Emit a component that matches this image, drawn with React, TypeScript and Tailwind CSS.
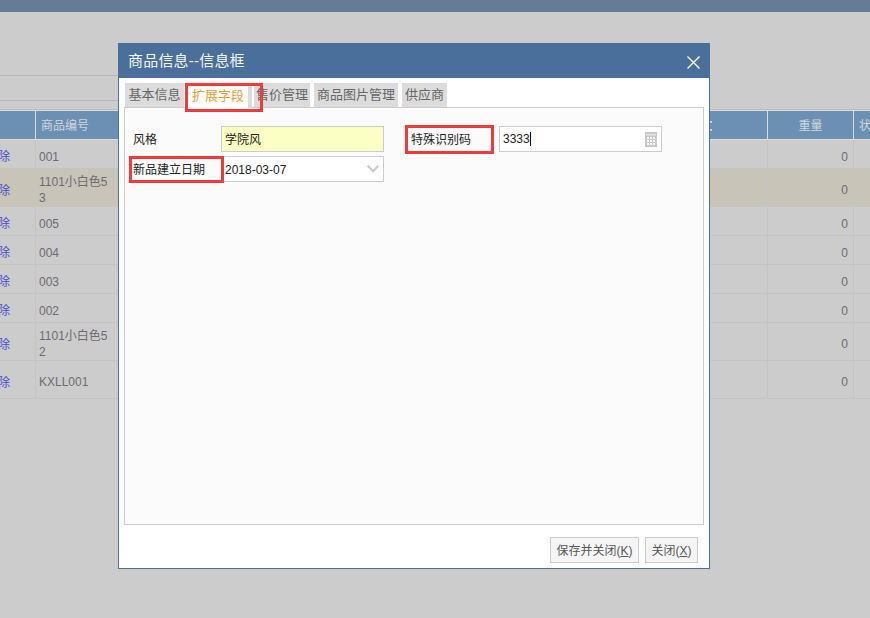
import React from 'react';

const FONT = "font-['Liberation_Sans','Noto_Sans_CJK_SC',sans-serif]";

const ROWS = [
  { code: ['001'], h: 'h-[29px]' },
  { code: ['1101小白色5', '3'], h: 'h-[38px]', hi: true },
  { code: ['005'], h: 'h-[29px]' },
  { code: ['004'], h: 'h-[29px]' },
  { code: ['003'], h: 'h-[29px]' },
  { code: ['002'], h: 'h-[29px]' },
  { code: ['1101小白色5', '2'], h: 'h-[38px]' },
  { code: ['KXLL001'], h: 'h-[38px]' },
];

// background grid behind the modal, dimmed by the overlay colours
function BackgroundPage() {
  return (
    <div className="w-full h-full bg-[#cccccc] overflow-hidden">
      <div className="h-[12px] bg-[#667c96]" />
      <div className="h-[63px]" />
      <div className="h-[26px] w-[300px] border-y border-[#b8b8b8]" />
      <div className="h-[9px] border-b border-[#bcbcbc]" />
      <div className="flex h-[30px] bg-[#6c90b4] border-y border-[#dcdcdc] text-[12px] text-[#cfd6dc]">
        <div className="w-[36px] border-r border-[#dcdcdc]" />
        <div className="flex-1 pl-[5px] pt-[2px] flex items-center justify-between pr-[55px]">
          <span>商品编号</span>
          <div className="flex flex-col gap-[6px]">
            <div className="w-[2px] h-[2px] bg-[#c5cdd6]" />
            <div className="w-[2px] h-[2px] bg-[#c5cdd6]" />
          </div>
        </div>
        <div className="w-[87px] pt-[2px] border-x border-[#dcdcdc] flex items-center justify-center">重量</div>
        <div className="w-[16px] pt-[2px] pl-[5px] flex items-center whitespace-nowrap overflow-hidden">状态</div>
      </div>
      {ROWS.map((r, i) => (
        <div
          key={i}
          className={`flex ${r.h} border-b border-[#c4c4c4] text-[12px] text-[#6f6a72] ${r.hi ? 'bg-[#c8c4b8]' : ''}`}
        >
          <div className="w-[36px] pt-[6px] border-r border-[#c4c4c4] flex items-center justify-end pr-[25px]">
            <span className="text-[#4a4ad0] whitespace-nowrap">删除</span>
          </div>
          <div className="flex-1 pl-[3px] pt-[5px] flex flex-col justify-center leading-[16px]">
            {r.code.map(c => <span key={c}>{c}</span>)}
          </div>
          <div className="w-[87px] pt-[5px] border-x border-[#c4c4c4] flex items-center justify-end pr-[5px]">0</div>
          <div className="w-[16px]" />
        </div>
      ))}
    </div>
  );
}

const TABS = [
  { label: '基本信息', cls: 'w-[59px]' },
  { label: '扩展字段', cls: 'w-[64px] ml-[4px]', active: true },
  { label: '售价管理', cls: 'w-[56px] ml-[2px]' },
  { label: '商品图片管理', cls: 'w-[84px] ml-[4px]' },
  { label: '供应商', cls: 'w-[45px] ml-[4px]' },
];

export default function App() {
  return (
    <div className={`relative w-[870px] h-[618px] overflow-hidden ${FONT}`}>
      <BackgroundPage />

      {/* Modal */}
      <div className="absolute left-[118px] top-[43px] w-[592px] h-[526px] bg-white border border-[#4a6f9a] flex flex-col">
        <div className="h-[35px] -mt-px -mx-px bg-[#4a6f9a] flex items-center justify-between pl-[10px] pr-[10px] shrink-0">
          <span className="text-[15px] pt-[2px] tracking-[0.2px] text-[#f4f6f8]">商品信息--信息框</span>
          <svg width="13" height="13" viewBox="0 0 13 13" fill="none" stroke="#ffffff" strokeWidth="1.4" className="mt-[3px]">
            <path d="M0.5 0.5l12 12M12.5 0.5l-12 12" />
          </svg>
        </div>

        {/* Tabs */}
        <div className="flex items-start pl-[6px] pt-[5px] h-[30px] shrink-0 relative -mb-px">
          {TABS.map(t => (
            <div
              key={t.label}
              className={`flex items-center justify-center text-[13px] ${t.cls} ${
                t.active
                  ? 'h-[25px] bg-white text-[#ee9a2e] border-r-[4px] border-[#dcdcdc]'
                  : 'h-[24px] bg-[#dcdcdc] text-[#666666]'
              }`}
            >
              {t.label}
            </div>
          ))}
        </div>

        {/* Panel */}
        <div className="mx-[5px] h-[418px] shrink-0 border border-[#cccccc] bg-[#fbfbfb] pt-[18px] pl-[8px] text-[12px] text-[#222222]">
          <div className="flex items-center h-[26px]">
            <span className="w-[88px] pt-[2px]">风格</span>
            <div className="w-[163px] h-[26px] bg-[#fbffc4] border border-[#cccccc] flex items-center pl-[3px] pt-[2px]">学院风</div>
            <span className="w-[88px] pl-[27px] pt-[2px] box-content">特殊识别码</span>
            <div className="w-[163px] h-[26px] bg-white border border-[#cccccc] flex items-center pl-[3px] justify-between pr-[4px]">
              <span className="flex items-center">3333<span className="w-px h-[14px] bg-black" /></span>
              <svg width="12" height="15" viewBox="0 0 12 15" className="block">
                <rect width="12" height="15" fill="#c8c8c8" />
                <rect x="1" y="2" width="10" height="1.5" fill="#e6e6e6" />
                <path d="M2 5h2v2H2zM5 5h2v2H5zM8 5h2v2H8zM2 8h2v2H2zM5 8h2v2H5zM8 8h2v2H8zM2 11h2v2H2zM5 11h2v2H5zM8 11h2v2H8z" fill="#fbfbfb" />
              </svg>
            </div>
          </div>
          <div className="flex items-center h-[26px] mt-[4px]">
            <span className="w-[88px] pt-[2px]">新品建立日期</span>
            <div className="w-[163px] h-[26px] bg-white border border-[#cccccc] flex items-center pl-[3px] justify-between pr-[4px]">
              <span className="pt-[2px]">2018-03-07</span>
              <svg width="12" height="8" viewBox="0 0 12 8" fill="none" stroke="#c8c8c8" strokeWidth="2">
                <path d="M0.7 0.7l5.3 5.6 5.3-5.6" />
              </svg>
            </div>
          </div>
        </div>

        {/* Footer */}
        <div className="flex justify-end gap-[6px] pt-[12px] pr-[11px] text-[12px] text-[#555555]">
          <button type="button" className="h-[26px] w-[89px] pt-[2px] bg-[#f5f5f5] border border-[#cccccc]">保存并关闭(<u>K</u>)</button>
          <button type="button" className="h-[26px] w-[53px] pt-[2px] bg-[#f5f5f5] border border-[#cccccc]">关闭(<u>X</u>)</button>
        </div>
      </div>

      {/* Red annotation boxes drawn over the screenshot */}
      <div className="absolute left-[185px] top-[83px] w-[78px] h-[29px] border-[3px] border-[#f23a3a]" />
      <div className="absolute left-[405px] top-[125px] w-[89px] h-[29px] border-[3px] border-[#f23a3a]" />
      <div className="absolute left-[129px] top-[156px] w-[95px] h-[27px] border-[3px] border-[#f23a3a]" />
    </div>
  );
}
